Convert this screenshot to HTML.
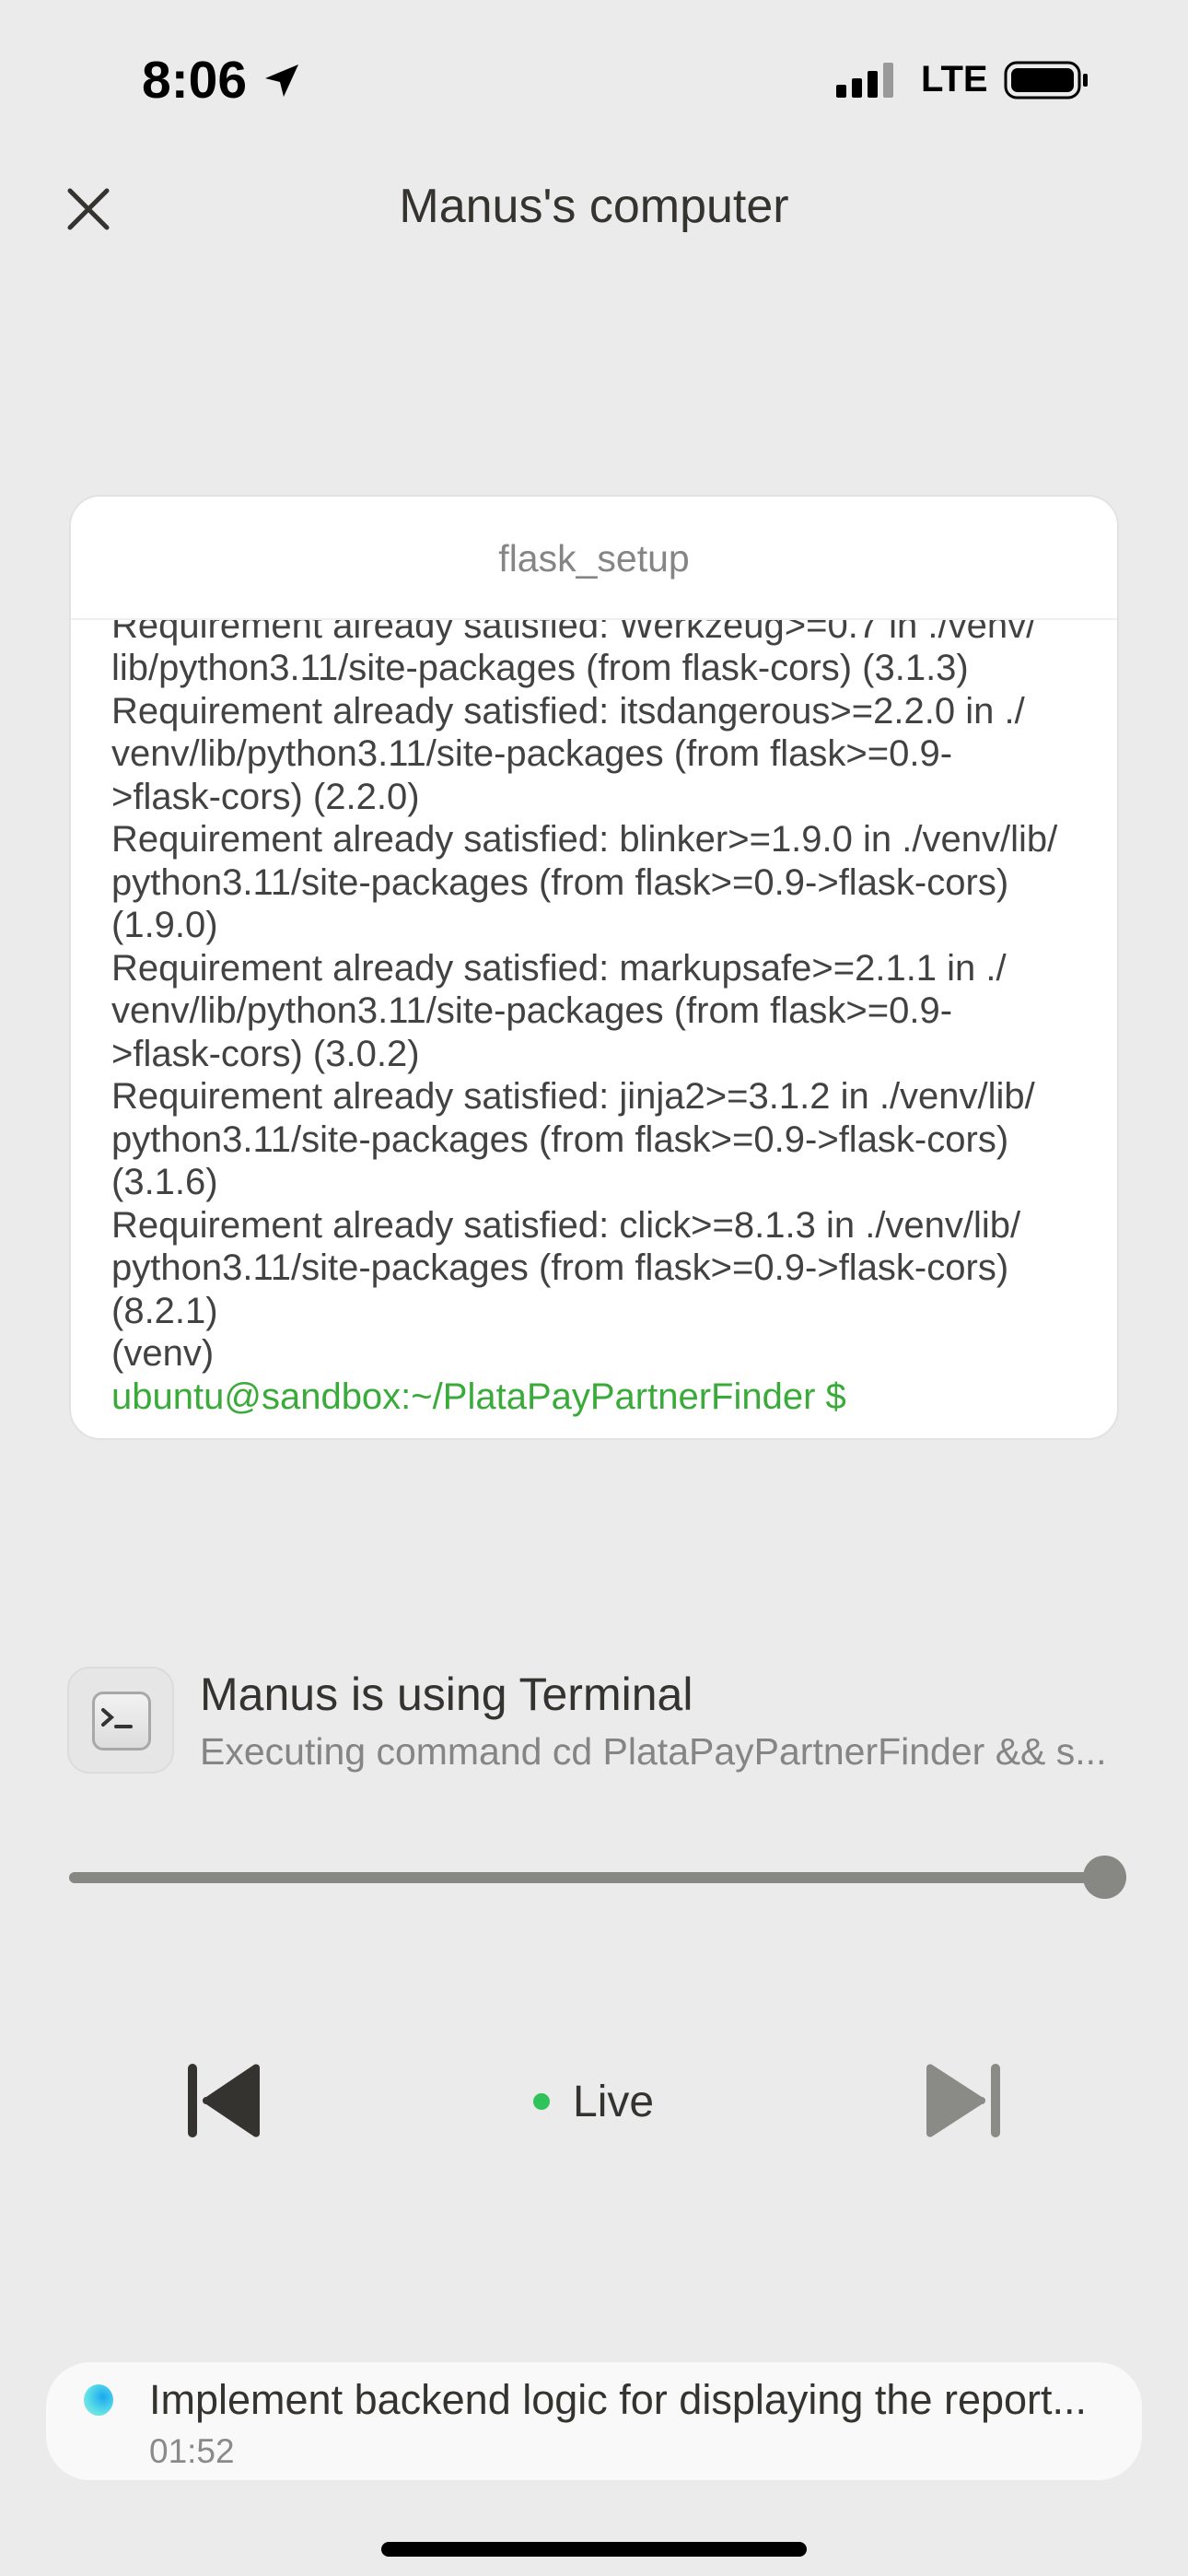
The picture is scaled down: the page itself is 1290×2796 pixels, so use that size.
<!DOCTYPE html>
<html><head><meta charset="utf-8"><style>
*{margin:0;padding:0;box-sizing:border-box}
body{width:1290px;height:2796px;background:#ebebeb;font-family:"Liberation Sans",sans-serif;position:relative;overflow:hidden;color:#34332f}
.a{position:absolute}
.card{left:75px;top:537px;width:1140px;height:1026px;background:#fff;border:2px solid #e2e2e2;border-radius:34px;overflow:hidden}
.hdr{position:absolute;left:0;top:0;width:100%;height:134px;background:#fff;border-bottom:2px solid #efefef;text-align:center;line-height:134px;font-size:41px;color:#858585;z-index:2}
.term{position:absolute;left:44px;bottom:22px;width:1080px;font-size:40px;line-height:46.5px;color:#424242;white-space:nowrap}
</style></head><body>
<div class="a" style="left:154px;top:54px;font-size:57px;font-weight:bold;color:#000">8:06</div>
<svg class="a" style="left:282px;top:64px" width="48" height="48" viewBox="0 0 24 24"><path d="M21 3L3 10.5l8 2 2 8z" fill="#000"/></svg>
<svg class="a" style="left:908px;top:68px" width="66" height="40"><rect x="0" y="24" width="11" height="14" rx="2" fill="#000"/><rect x="17" y="17" width="11" height="21" rx="2" fill="#000"/><rect x="34" y="9" width="11" height="29" rx="2" fill="#000"/><rect x="51" y="0" width="11" height="38" rx="2" fill="#999"/></svg>
<div class="a" style="left:1000px;top:64px;font-size:40px;font-weight:bold;color:#000">LTE</div>
<svg class="a" style="left:1090px;top:66px" width="94" height="44"><rect x="2" y="2" width="80" height="38" rx="12" fill="none" stroke="#000" stroke-width="3"/><rect x="8" y="8" width="68" height="26" rx="7" fill="#000"/><rect x="86" y="14" width="5" height="14" rx="2" fill="#000"/></svg>
<svg class="a" style="left:72px;top:203px" width="48" height="48"><path d="M4 4L44 44M44 4L4 44" stroke="#34332f" stroke-width="5" stroke-linecap="round"/></svg>
<div class="a" style="left:0;width:1290px;top:194px;text-align:center;font-size:52px;color:#34332f">Manus's computer</div>
<div class="a card"><div class="hdr">flask_setup</div>
<div class="term">Requirement already satisfied: Werkzeug&gt;=0.7 in ./venv/<br>lib/python3.11/site-packages (from flask-cors) (3.1.3)<br>Requirement already satisfied: itsdangerous&gt;=2.2.0 in ./<br>venv/lib/python3.11/site-packages (from flask&gt;=0.9-<br>&gt;flask-cors) (2.2.0)<br>Requirement already satisfied: blinker&gt;=1.9.0 in ./venv/lib/<br>python3.11/site-packages (from flask&gt;=0.9-&gt;flask-cors)<br>(1.9.0)<br>Requirement already satisfied: markupsafe&gt;=2.1.1 in ./<br>venv/lib/python3.11/site-packages (from flask&gt;=0.9-<br>&gt;flask-cors) (3.0.2)<br>Requirement already satisfied: jinja2&gt;=3.1.2 in ./venv/lib/<br>python3.11/site-packages (from flask&gt;=0.9-&gt;flask-cors)<br>(3.1.6)<br>Requirement already satisfied: click&gt;=8.1.3 in ./venv/lib/<br>python3.11/site-packages (from flask&gt;=0.9-&gt;flask-cors)<br>(8.2.1)<br>(venv)<br><span style="color:#3aab3a">ubuntu@sandbox:~/PlataPayPartnerFinder $</span></div></div>
<div class="a" style="left:73px;top:1809px;width:116px;height:116px;border-radius:24px;background:#e6e6e6;border:2px solid #dcdcdc"></div>
<div class="a" style="left:100px;top:1836px;width:64px;height:64px;border-radius:12px;background:linear-gradient(#f2f2f2,#dcdcdc);border:3px solid #a8a8a8"></div>
<svg class="a" style="left:108px;top:1850px" width="48" height="36"><path d="M4 6l9 8-9 8M18 24h16" stroke="#333" stroke-width="4" fill="none" stroke-linecap="round"/></svg>
<div class="a" style="left:217px;top:1810px;font-size:50px;color:#34332f">Manus is using Terminal</div>
<div class="a" style="left:217px;top:1878px;font-size:41px;color:#858585;white-space:nowrap">Executing command cd PlataPayPartnerFinder &amp;&amp; s...</div>
<div class="a" style="left:75px;top:2032px;width:1124px;height:12px;border-radius:6px;background:#878784"></div>
<div class="a" style="left:1176px;top:2014px;width:47px;height:47px;border-radius:50%;background:#878784"></div>
<svg class="a" style="left:200px;top:2238px" width="90" height="84"><rect x="4" y="2" width="10" height="80" rx="5" fill="#34332f"/><path d="M82 6v72a4 4 0 0 1-6 3L24 46a4 4 0 0 1 0-8L76 3a4 4 0 0 1 6 3z" fill="#34332f"/></svg>
<div class="a" style="left:579px;top:2272px;width:18px;height:18px;border-radius:50%;background:#2fc35a"></div>
<div class="a" style="left:622px;top:2254px;font-size:48px;color:#34332f">Live</div>
<svg class="a" style="left:1000px;top:2238px" width="90" height="84"><rect x="76" y="2" width="10" height="80" rx="5" fill="#8a8a87"/><path d="M6 6v72a4 4 0 0 0 6 3L66 46a4 4 0 0 0 0-8L12 3a4 4 0 0 0-6 3z" fill="#8a8a87"/></svg>
<div class="a" style="left:50px;top:2564px;width:1190px;height:128px;border-radius:48px;background:#f9f9f9"></div>
<div class="a" style="left:91px;top:2588px;width:32px;height:34px;border-radius:50%;background:radial-gradient(circle at 65% 40%,#1aa8f0,#5fe0e8 60%,#9aeed0)"></div>
<div class="a" style="left:162px;top:2579px;font-size:45px;color:#34332f;white-space:nowrap">Implement backend logic for displaying the report...</div>
<div class="a" style="left:162px;top:2640px;font-size:37px;color:#8a8a8a">01:52</div>
<div class="a" style="left:414px;top:2759px;width:462px;height:16px;border-radius:8px;background:#000"></div>
</body></html>
